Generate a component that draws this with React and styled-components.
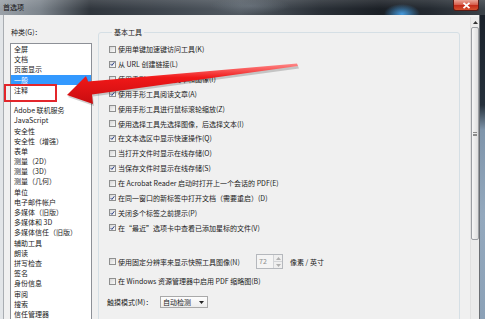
import React from "react";
import styled, { createGlobalStyle } from "styled-components";

const Global = createGlobalStyle`
  html, body { margin: 0; padding: 0; background: #f0f0f0; }
  body { font-family: "Noto Sans CJK SC", "Liberation Sans", sans-serif; }
  * { box-sizing: border-box; }
`;

const Screen = styled.div`
  position: relative;
  width: 485px;
  height: 319px;
  overflow: hidden;
  display: flex;
  flex-direction: column;
  font-family: "Noto Sans CJK SC", "Liberation Sans", sans-serif;
  font-size: 7px;
  color: #1b1b1b;
  background: #f0f0f0;
`;

const TitleBar = styled.div`
  height: 15px;
  flex: none;
  display: flex;
  align-items: flex-start;
  background:
    radial-gradient(ellipse 18px 10px at 402px 14px, rgba(70, 160, 230, 0.95), rgba(70, 160, 230, 0) 100%),
    radial-gradient(ellipse 40px 8px at 250px 6px, rgba(120, 130, 140, 0.5), rgba(120, 130, 140, 0) 100%),
    linear-gradient(180deg, rgba(255, 255, 255, 0.12), rgba(255, 255, 255, 0) 60%),
    linear-gradient(90deg, #9aa1a8 0px, #7d858d 40px, #30363d 90px, #3f464e 160px, #525a62 240px, #2a3037 320px, #1b2026 380px, #242a31 430px, #3b4249 485px);
`;

const Title = styled.span`
  padding: 3px 0 0 3px;
  font-size: 7px;
  line-height: 9px;
  color: #111;
`;

const CloseButton = styled.div`
  margin-left: auto;
  margin-right: 6px;
  width: 26px;
  height: 11px;
  border: 1px solid #5a1a14;
  border-top: none;
  border-radius: 0 0 3px 3px;
  background: linear-gradient(180deg, #e9a597 0%, #d8614f 45%, #c42d1b 55%, #d5502e 100%);
  display: flex;
  align-items: center;
  justify-content: center;
`;

const Body = styled.div`
  flex: 1;
  display: flex;
  min-height: 0;
`;

const Frame = styled.div`
  flex: 1;
  display: flex;
  background: #f0f0f0;
  box-shadow: inset 3px 0 0 #e2e5e8, inset 4px 0 0 #a9adb2;
  border-right: 1px solid #6a6e73;
`;

const DesktopStrip = styled.div`
  width: 5px;
  flex: none;
  background: linear-gradient(180deg, #1a212a 0px, #26313c 90px, #7f95ab 115px, #93a8bd 200px, #8aa0b6 319px);
`;

const LeftPane = styled.div`
  width: 92px;
  flex: none;
  padding-left: 10px;
  display: flex;
  flex-direction: column;
`;

const PaneLabel = styled.div`
  margin-top: 12px;
  line-height: 10px;
  height: 10px;
  padding-left: 1px;
`;

const ListBox = styled.div`
  margin-top: 6px;
  flex: 1;
  background: #fff;
  border: 1px solid #8d9097;
  border-bottom: none;
  overflow: hidden;
`;

const ListItem = styled.div`
  height: 10.2px;
  line-height: 10.2px;
  padding-left: 3px;
  white-space: nowrap;
  background: ${(p) => (p.$selected ? "#3399ff" : "transparent")};
  color: ${(p) => (p.$selected ? "#fff" : "#1b1b1b")};
`;

const GroupBox = styled.fieldset`
  margin: 12px 0 -40px 6px;
  width: 362px;
  flex: none;
  border: 1px solid #d5dfe5;
  border-radius: 3px;
  padding: 5px 0 0 10px;
  min-width: 0;
`;

const Legend = styled.legend`
  margin-left: 3px;
  padding: 0 2px;
  line-height: 10px;
  font-size: 7px;
  color: #1b1b1b;
`;

const Row = styled.div`
  display: flex;
  align-items: center;
  height: ${(p) => p.$h || 14.85}px;
  margin-top: ${(p) => p.$mt || 0}px;
  margin-left: ${(p) => p.$ml || 0}px;
  white-space: nowrap;
`;

const Box = styled.span`
  width: 7px;
  height: 7px;
  flex: none;
  margin-right: 2px;
  border: 1px solid #8e8f8f;
  background: linear-gradient(135deg, #d6d6d6, #fbfbfb);
  display: flex;
  align-items: center;
  justify-content: center;
`;

const Text = styled.span`
  line-height: 10px;
  width: ${(p) => (p.$w ? `${p.$w}px` : "auto")};
  flex: none;
  color: ${(p) => p.$color || "#1b1b1b"};
`;

const SpinBox = styled.div`
  width: 27px;
  height: 15px;
  flex: none;
  display: flex;
  border: 1px solid #b5b8bd;
  background: #f4f4f4;
`;

const SpinValue = styled.span`
  flex: 1;
  padding-left: 2px;
  line-height: 13px;
  color: #8c8c8c;
`;

const SpinButtons = styled.div`
  width: 9px;
  display: flex;
  flex-direction: column;
  border-left: 1px solid #d2d4d7;
`;

const SpinHalf = styled.div`
  flex: 1;
  display: flex;
  align-items: center;
  justify-content: center;
  background: #efefef;
  & + & { border-top: 1px solid #d2d4d7; }
`;

const Unit = styled.span`
  margin-left: 7px;
  line-height: 10px;
`;

const Select = styled.div`
  width: 48px;
  height: 12px;
  flex: none;
  display: flex;
  align-items: center;
  border: 1px solid #a9a9a9;
  background: linear-gradient(180deg, #fdfdfd, #ececec);
  padding: 0 3px 0 2px;
`;

const SelectText = styled.span`
  flex: 1;
  line-height: 10px;
`;

const ScrollBar = styled.div`
  width: 9px;
  flex: none;
  margin: 2px 0 0 10px;
  display: flex;
  flex-direction: column;
  background: #ebebeb;
  border-left: 1px solid #e0e0e0;
`;

const ScrollArrow = styled.div`
  height: 10px;
  display: flex;
  align-items: center;
  justify-content: center;
`;

const Thumb = styled.div`
  height: 213px;
  border: 1px solid #9b9ea3;
  border-radius: 2px;
  background: linear-gradient(90deg, #f6f6f6, #dedede);
  display: flex;
  align-items: center;
  justify-content: center;
`;

const Grip = styled.div`
  width: 4px;
  height: 4px;
  border-top: 1px solid #8a8a8a;
  border-bottom: 1px solid #8a8a8a;
  position: relative;
  &::after {
    content: "";
    position: absolute;
    left: 0;
    right: 0;
    top: 1px;
    border-top: 1px solid #8a8a8a;
  }
`;

const Highlight = styled.div`
  position: absolute;
  left: 4px;
  top: 84px;
  width: 53px;
  height: 18px;
  border: 2px solid #e3262b;
`;

const ArrowLayer = styled.svg`
  position: absolute;
  left: 0;
  top: 0;
  pointer-events: none;
`;

const Check = () => (
  <svg width="6" height="6" viewBox="0 0 6 6">
    <path d="M0.8 3.1 L2.3 4.7 L5.2 0.9" fill="none" stroke="#2a3f86" strokeWidth="1.2" />
  </svg>
);

const CheckItem = ({ checked, children, mt, h, w }) => (
  <Row $mt={mt} $h={h}>
    <Box>{checked && <Check />}</Box>
    <Text $w={w}>{children}</Text>
  </Row>
);

const categories = [
  "全屏",
  "文档",
  "页面显示",
  "一般",
  "注释",
  "",
  "Adobe 联机服务",
  "JavaScript",
  "安全性",
  "安全性（增强）",
  "表单",
  "测量（2D）",
  "测量（3D）",
  "测量（几何）",
  "单位",
  "电子邮件帐户",
  "多媒体（旧版）",
  "多媒体和 3D",
  "多媒体信任（旧版）",
  "辅助工具",
  "朗读",
  "拼写检查",
  "签名",
  "身份信息",
  "审阅",
  "搜索",
  "信任管理器",
];

const options = [
  ["使用单键加速键访问工具(K)", false],
  ["从 URL 创建链接(L)", true],
  ["使用手形工具选择文本和图像(I)", false],
  ["使用手形工具阅读文章(A)", true],
  ["使用手形工具进行鼠标滚轮缩放(Z)", false],
  ["使用选择工具先选择图像，后选择文本(I)", false],
  ["在文本选区中显示快速操作(Q)", true],
  ["当打开文件时显示在线存储(O)", false],
  ["当保存文件时显示在线存储(S)", true],
  ["在 Acrobat Reader 启动时打开上一个会话的 PDF(E)", false],
  ["在同一窗口的新标签中打开文档（需要重启）(D)", true],
  ["关闭多个标签之前提示(P)", true],
  ["在\u201c最近\u201d选项卡中查看已添加星标的文件(V)", true],
];

export default function App() {
  return (
    <Screen>
      <Global />
      <TitleBar>
        <Title>首选项</Title>
        <CloseButton>
          <svg width="9" height="7" viewBox="0 0 9 7">
            <path d="M1.5 0.8 L7.5 6.2 M7.5 0.8 L1.5 6.2" stroke="#fff" strokeWidth="1.8" />
          </svg>
        </CloseButton>
      </TitleBar>
      <Body>
        <Frame>
          <LeftPane>
            <PaneLabel>种类(G)：</PaneLabel>
            <ListBox>
              {categories.map((c, i) => (
                <ListItem key={i} $selected={c === "一般"}>
                  {c}
                </ListItem>
              ))}
            </ListBox>
          </LeftPane>
          <GroupBox>
            <Legend>基本工具</Legend>
            {options.map(([label, checked]) => (
              <CheckItem key={label} checked={checked}>
                {label}
              </CheckItem>
            ))}
            <Row $mt={19.4} $h={15}>
              <Box />
              <Text $w={138}>使用固定分辨率来显示快照工具图像(N)</Text>
              <SpinBox>
                <SpinValue>72</SpinValue>
                <SpinButtons>
                  <SpinHalf>
                    <svg width="5" height="3" viewBox="0 0 5 3">
                      <path d="M0 3 L2.5 0 L5 3 Z" fill="#b0b0b0" />
                    </svg>
                  </SpinHalf>
                  <SpinHalf>
                    <svg width="5" height="3" viewBox="0 0 5 3">
                      <path d="M0 0 L2.5 3 L5 0 Z" fill="#b0b0b0" />
                    </svg>
                  </SpinHalf>
                </SpinButtons>
              </SpinBox>
              <Unit>像素 / 英寸</Unit>
            </Row>
            <CheckItem mt={4.6}>在 Windows 资源管理器中启用 PDF 缩略图(B)</CheckItem>
            <Row $mt={7.5} $h={12} $ml={-2}>
              <Text $w={53}>触摸模式(M)：</Text>
              <Select>
                <SelectText>自动检测</SelectText>
                <svg width="5" height="3" viewBox="0 0 5 3">
                  <path d="M0 0 L2.5 3 L5 0 Z" fill="#222" />
                </svg>
              </Select>
            </Row>
          </GroupBox>
          <ScrollBar>
            <ScrollArrow>
              <svg width="5" height="3" viewBox="0 0 5 3">
                <path d="M0 3 L2.5 0 L5 3 Z" fill="#333" />
              </svg>
            </ScrollArrow>
            <Thumb>
              <Grip />
            </Thumb>
          </ScrollBar>
        </Frame>
        <DesktopStrip />
      </Body>
      <Highlight />
      <ArrowLayer width="485" height="319" viewBox="0 0 485 319">
        <defs>
          <linearGradient id="arrowFill" x1="0" y1="0" x2="0" y2="1">
            <stop offset="0" stopColor="#ff8a8a" />
            <stop offset="0.35" stopColor="#f01818" />
            <stop offset="1" stopColor="#c80c10" />
          </linearGradient>
        </defs>
        <polygon
          points="68,97 87,78 89,83.5 298,66 299,68.5 93,96.6 94,106"
          fill="#000"
          opacity="0.18"
        />
        <polygon
          points="67,95 86,76 88,81.5 297,63.5 298,66 92,94.6 93,104"
          fill="url(#arrowFill)"
        />
      </ArrowLayer>
    </Screen>
  );
}
